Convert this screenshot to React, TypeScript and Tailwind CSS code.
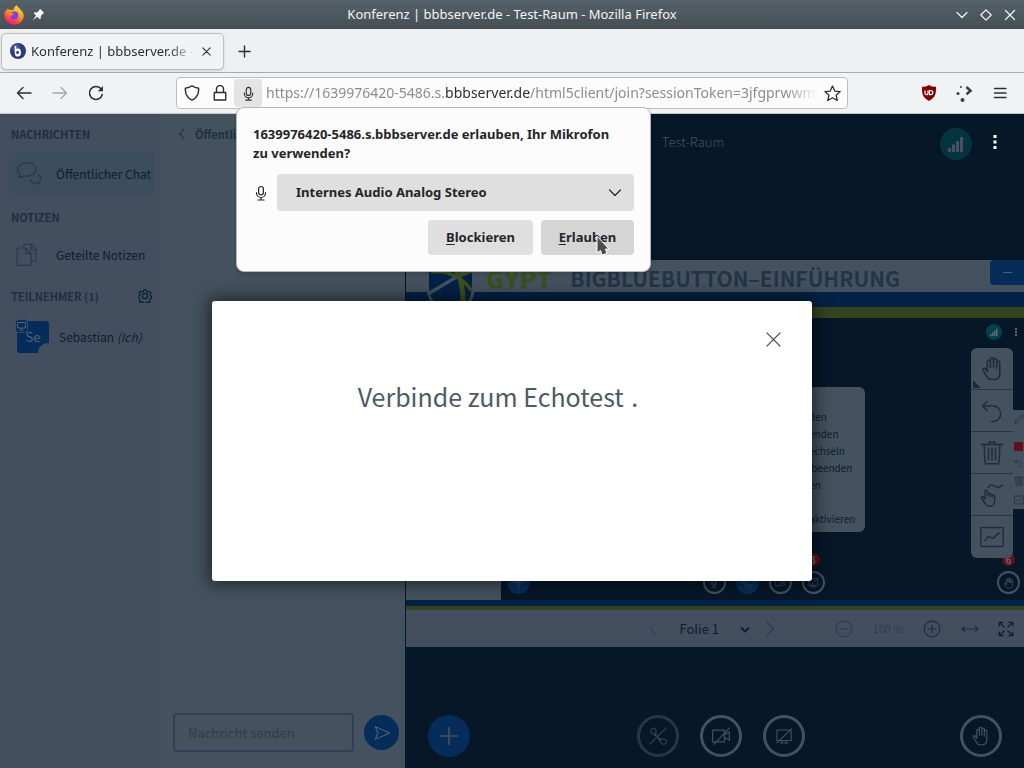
import { ReactNode, useState } from 'react'

type IconProps = {
  size?: number
  className?: string
  stroke?: number
  box?: number
  children: ReactNode
}

function Icon({ size = 16, className = '', stroke = 1, box = 24, children }: IconProps) {
  return (
    <svg
      width={size}
      height={size}
      viewBox={`0 0 ${box} ${box}`}
      className={`shrink-0 ${className}`}
      fill="none"
      stroke="currentColor"
      strokeWidth={stroke}
      strokeLinecap="round"
      strokeLinejoin="round"
      aria-hidden="true"
    >
      {children}
    </svg>
  )
}

const handPath =
  'M7 14V5.5a1.5 1.5 0 0 1 3 0V11V3.2a1.5 1.5 0 0 1 3 0V11V4a1.5 1.5 0 0 1 3 0V12V6.5a1.5 1.5 0 0 1 3 0V16c0 4-2 6.5-5 6.5h-3c-2.500 0-3.500-1-4.500-3L2.800 13.500c-.6-1.500 1-2.600 2.200-1.300L7 15'

const HandIcon = ({ size = 22, stroke = 1.4 }) => (
  <Icon size={size} stroke={stroke}>
    <path d={handPath} />
  </Icon>
)

const UndoIcon = ({ size = 24, stroke = 1.4 }) => (
  <Icon size={size} stroke={stroke}>
    <path d="M7 2.500 2.500 7 7 11.500M2.500 7H13a7.500 7.500 0 0 1 0 15.500h-1.500" />
  </Icon>
)

const TrashIcon = ({ size = 24, stroke = 1.4 }) => (
  <Icon size={size} stroke={stroke}>
    <path d="M1.500 3.500h21M4 3.500 5 21.500a1.500 1.500 0 0 0 1.500 1.300h11a1.500 1.500 0 0 0 1.500-1.300L20 3.500M8.500 3.500 9.500 1h5l1 2.500M8.500 7v12M12 7v12M15.500 7v12" />
  </Icon>
)

const ChartIcon = ({ size = 24, stroke = 1.4 }) => (
  <Icon size={size} stroke={stroke}>
    <rect x="0.8" y="2.500" width="22.400" height="19" rx="1.200" />
    <path d="M5 15.500c2-4 4-4.500 6-3s3 .5 4.500-1.500 2-2.500 4-3" />
  </Icon>
)

const MultiUserIcon = () => (
  <Icon size={24} stroke={1.4}>
    <path d="M8 4.500c2.500-3.500 4.500-3 6.500-1.500s5 2 8-1" />
    <path d="M5 16V8.500a1.300 1.300 0 0 1 2.600 0V13V11.500a1.200 1.200 0 0 1 2.400 0V13.500V12a1.200 1.200 0 0 1 2.300 0V14V13.200a1.200 1.200 0 0 1 2.300 0V18c0 3-1.500 5-4 5H8.500c-1.500 0-2.300-.8-3-2L1.500 15c-.5-1.200.7-2 1.700-1.200L5 16" />
  </Icon>
)

const PlusIcon = ({ size = 20, stroke = 2 }) => (
  <Icon size={size} stroke={stroke}>
    <path d="M12 2v20M2 12h20" />
  </Icon>
)

const MicIcon = ({ size = 16, className = '' }) => (
  <Icon size={size} box={16} stroke={1.2} className={className}>
    <rect x="5.600" y="1.500" width="4.800" height="8.500" rx="2.400" />
    <path d="M3.500 7.500v.5a4.500 4.500 0 0 0 9 0v-.5M8 12.500V15M5 15h6" />
  </Icon>
)

const CameraOffIcon = ({ size = 20 }) => (
  <Icon size={size} stroke={1.4}>
    <path d="M2 5h14v14H2zM16 10.500 22 7v10l-6-3.500M22 2.500 3.500 22" />
  </Icon>
)

const ScreenOffIcon = ({ size = 20 }) => (
  <Icon size={size} stroke={1.4}>
    <path d="M2.500 4h19v14h-19zM9 18v3M15 18v3M7 21.200h10M22 2.500 2.500 21" />
  </Icon>
)

// handset with a stroke through it
const PhoneOffIcon = () => (
  <Icon size={18} stroke={1.5}>
    <path d="M2.500 5c0-2.500 2.500-4 4.500-3s3 3.500 2 6c-.5 1.500 0 2.500 1 3.500l4 4c1 1 2.200 1.200 3.500.7 2.500-.8 5 .3 5.500 2.500s-1 4.300-3.500 4.300-4-1.500-4.500-3.500c-.3-1.500-1-2.500-2-3.500l-5-5c-1-1-2-1.500-3-2C3.300 8.200 2.500 6.700 2.500 5zM22.500 1.500l-21 21" />
  </Icon>
)

const SignalIcon = ({ size = 16 }) => (
  <Icon size={size} box={16} stroke={0}>
    <path fill="currentColor" d="M0 12h3v4H0zM4 8.500h3V16H4zM8 5h3v11H8zM12 1h3v15h-3z" />
  </Icon>
)

function TitleBar() {
  return (
    <div className="flex h-[29px] shrink-0 items-center bg-linear-to-b from-[#55626b] to-[#454e55] text-[#f4f5f5]">
      <div className="flex w-[100px] items-center gap-2 pl-1">
        <svg width="20" height="20" viewBox="0 0 20 20" aria-hidden="true">
          <defs>
            <linearGradient id="fox" x1="0.8" y1="0" x2="0.3" y2="1">
              <stop offset="0" stopColor="#ffe43c" />
              <stop offset="0.45" stopColor="#ff9a1f" />
              <stop offset="0.8" stopColor="#ff3750" />
              <stop offset="1" stopColor="#e31587" />
            </linearGradient>
          </defs>
          <path
            d="M12.500 0c.4 1.800 3 2.800 4.200 4.800C19 7 20 9.500 19.600 12c-.8 4.500-4.600 7.800-9.400 7.800C4.500 19.800.3 15.500.4 10c0-2.200.8-4 1.400-5.200L2.600 6.300 3.500 3.500 5.500 5c1.200-.6 2.700-.4 3.600.2C10 3 11 1 12.500 0z"
            fill="url(#fox)"
          />
          <circle cx="10.300" cy="10.600" r="4" fill="#7543e3" />
          <path d="M4.500 7.500c2 .8 4.500 0 5.500 1.700-1.700.3-2.700 1-2.800 2-1.500-.5-2.500-2-2.700-3.700z" fill="#ff8a16" />
        </svg>
        <svg width="13" height="13" viewBox="0 0 13 13" className="text-white" aria-hidden="true">
          <path d="M8 .8 12.200 5l-1.300.7-2.200 2.200.1 2.600-1 .7-2.500-2.500L.8 12.300 4 7.500 1.800 5.300l.7-1 2.600.1L7.300 2.200z" fill="currentColor" />
        </svg>
      </div>
      <h1 className="flex-1 truncate text-center text-[13px]">Konferenz | bbbserver.de - Test-Raum - Mozilla Firefox</h1>
      <div className="flex w-[100px] items-center justify-end gap-3 pr-2">
        <button type="button" aria-label="Minimieren">
          <Icon size={12} box={12} stroke={1.2}>
            <path d="m1 3.500 5 5 5-5" />
          </Icon>
        </button>
        <button type="button" aria-label="Maximieren">
          <Icon size={12} box={12} stroke={1.2}>
            <path d="m6 .8 5.200 5.200L6 11.200.8 6z" />
          </Icon>
        </button>
        <button type="button" aria-label="Fenster schließen">
          <Icon size={12} box={12} stroke={1.2}>
            <path d="m1.500 1.500 9 9M10.500 1.500l-9 9" />
          </Icon>
        </button>
      </div>
    </div>
  )
}

function TabBar() {
  return (
    <div className="flex h-11 shrink-0 items-center border-b border-[#a9abad] bg-[#eeeff1] pt-px pl-px text-[#2a2e32]">
      <div className="flex h-[37px] w-[223px] items-center gap-1 rounded-[5px] border border-[#bcbec1] bg-[#f1f2f4] px-2 shadow-sm">
        <svg width="16" height="16" viewBox="0 0 16 16" className="shrink-0" aria-hidden="true">
          <circle cx="8" cy="8" r="8" fill="#2b3a7e" />
          <circle cx="6" cy="5" r="4" fill="#6673a8" opacity="0.5" />
          <path d="M5.500 3v7.500M5.500 8.200a2.300 2.300 0 1 1 0 2.300a2.300 2.300 0 0 0 4.600 0V8.500a2.300 2.300 0 0 0-4.600 0" fill="none" stroke="#fff" strokeWidth="1.500" />
        </svg>
        <span className="flex-1 overflow-hidden pl-px text-[13px] leading-5 whitespace-nowrap [mask-image:linear-gradient(to_right,black_85%,transparent)]">
          Konferenz | bbbserver.de -
        </span>
        <button type="button" aria-label="Tab schließen" className="px-1">
          <Icon size={9} box={9} stroke={1.1}>
            <path d="m.8.8 7.400 7.400M8.200.8.8 8.200" />
          </Icon>
        </button>
      </div>
      <button type="button" aria-label="Neuer Tab" className="ml-3.5">
        <Icon size={13} box={13} stroke={1.4}>
          <path d="M6.500 1v11M1 6.500h11" />
        </Icon>
      </button>
    </div>
  )
}

function NavBar() {
  return (
    <div className="flex h-[41px] shrink-0 items-center border-b border-[#c3c5c7] bg-[#f1f2f4] text-[#2a2e32]">
      <div className="flex w-[176px] items-center gap-5 pl-4">
        <button type="button" aria-label="Zurück">
          <Icon size={16} box={16} stroke={1.4}>
            <path d="M15 8H1.500M7 2.500 1.500 8 7 13.500" />
          </Icon>
        </button>
        <button type="button" aria-label="Vor" className="text-[#a5a7a9]">
          <Icon size={16} box={16} stroke={1.4}>
            <path d="M1 8h13.500M9 2.500 14.500 8 9 13.500" />
          </Icon>
        </button>
        <button type="button" aria-label="Neu laden">
          <Icon size={16} box={16} stroke={1.5}>
            <path d="M14.300 9.500A6.500 6.500 0 1 1 12.800 3.500" />
            <path d="M15 1v5.200H9.800z" fill="currentColor" stroke="none" />
          </Icon>
        </button>
      </div>
      <div className="flex h-8 w-[672px] items-center rounded border border-[#b9bbbd] bg-[#fcfcfc]">
        <button type="button" aria-label="Schutz vor Aktivitätenverfolgung" className="pl-[7px]">
          <Icon size={16} box={16} stroke={1.4}>
            <path d="M8 .8c2 1.500 4 2.200 6.700 2.400.2 5.300-1.700 9.700-6.700 12-5-2.300-6.900-6.700-6.700-12C4 3 6 2.300 8 .8z" />
          </Icon>
        </button>
        <button type="button" aria-label="Verbindung sicher" className="ml-3">
          <Icon size={16} box={16} stroke={1.4}>
            <path d="M2.300 7.500h11.400v7.500H2.300zM4.500 7.500V4a3.500 3.500 0 0 1 7 0v3.500" />
          </Icon>
        </button>
        <button type="button" aria-label="Mikrofon-Berechtigung" className="ml-1.5 flex h-7 w-7 items-center justify-center rounded-sm bg-[#e4e4e4]">
          <MicIcon size={15} />
        </button>
        <div
          role="textbox"
          aria-label="Adresse"
          className="ml-1 flex-1 overflow-hidden text-[14px] leading-5 whitespace-nowrap text-[#8b8d8f] [mask-image:linear-gradient(to_right,black_94%,transparent)]"
        >
          https://1639976420-5486.s.<span className="text-[#2a2e32]">bbbserver.de</span>/html5client/join?sessionToken=3jfgprwwml
        </div>
        <button type="button" aria-label="Lesezeichen hinzufügen" className="mr-1.5 ml-1.5">
          <Icon size={17} box={16} stroke={1.2}>
            <path d="m8 1 2.100 4.700 5.100.5-3.900 3.400 1.200 5L8 12l-4.500 2.600 1.200-5L.8 6.200l5.100-.5z" />
          </Icon>
        </button>
      </div>
      <div className="flex flex-1 items-center justify-end gap-[19px] pr-4">
        <button type="button" aria-label="uBlock Origin">
          <svg width="16" height="16" viewBox="0 0 16 16" aria-hidden="true">
            <path d="M8 0c2 1.400 4 1.800 7 1.800 0 6.700 0 10.200-7 14.200C1 12 1 8.500 1 1.800 4 1.800 6 1.400 8 0z" fill="#800000" />
            <path d="M4 5.500v2.700a1.500 1.500 0 0 0 3 0V5.500M8.500 5.500v4.200h1.200a2.100 2.100 0 0 0 0-4.200z" fill="none" stroke="#fff" strokeWidth="1.200" />
          </svg>
        </button>
        <button type="button" aria-label="Erweiterung">
          <svg width="17" height="17" viewBox="0 0 17 17" fill="#3c4043" aria-hidden="true">
            <circle cx="5" cy="2" r="1" />
            <circle cx="2" cy="8.500" r="1.500" />
            <circle cx="6.500" cy="15" r="2" />
            <path d="m10.500 2 4 3.700-4 3.700" fill="none" stroke="#3c4043" strokeWidth="2.600" />
          </svg>
        </button>
        <button type="button" aria-label="Menü">
          <Icon size={16} box={16} stroke={1.4}>
            <path d="M2.500 3.500h11.500M2.500 8h11.500M2.500 12.500h11.500" />
          </Icon>
        </button>
      </div>
    </div>
  )
}

function PermissionPopup() {
  return (
    <div className="absolute top-[107px] left-[236px] w-[415px] rounded-lg border border-[#b4b6b8] bg-[#fcfcfc] px-4 pt-[17px] pb-4 text-[13px] font-bold text-[#232629] shadow-md">
      <p className="leading-[19px]">
        1639976420-5486.s.bbbserver.de erlauben, Ihr Mikrofon
        <br />
        zu verwenden?
      </p>
      <div className="mt-[11px] flex items-center gap-2">
        <MicIcon size={16} />
        <div className="relative flex-1">
          <select
            aria-label="Mikrofon"
            className="h-[37px] w-full appearance-none rounded bg-[#dfdfdf] pl-[19px] font-bold"
          >
            <option>Internes Audio Analog Stereo</option>
          </select>
          <Icon size={14} box={14} stroke={1.2} className="pointer-events-none absolute top-3 right-3">
            <path d="m1.500 4 5.500 5.500L12.500 4" />
          </Icon>
        </div>
      </div>
      <div className="mt-[9px] flex justify-end gap-2">
        <button type="button" className="h-[35px] w-[105px] rounded bg-[#dfdfdf]">
          <span className="underline underline-offset-2">B</span>lockieren
        </button>
        <button type="button" className="h-[35px] w-[93px] rounded bg-[#d5d5d5]">
          <span className="underline underline-offset-2">E</span>rlauben
        </button>
      </div>
      <svg width="14" height="22" viewBox="0 0 14 22" className="absolute top-[127px] left-[359px]" aria-hidden="true">
        <path d="M1 1v17l3.500-2.500 1.500 4.500 5-1.500-1.500-4.500H13z" fill="#4d4d4d" stroke="#fff" />
      </svg>
    </div>
  )
}

function Sidebar() {
  return (
    <aside className="w-40 shrink-0 bg-[#434f5f] pt-2.5 pl-2 text-[12px] text-[#0b1d2f]">
      <h2 className="pl-[3px] text-[11px] leading-5 font-bold text-[#1d2f41]">NACHRICHTEN</h2>
      <button type="button" className="mt-[9px] flex h-[41px] w-[147px] items-center rounded-l bg-[#3b4d5e] pl-2 whitespace-nowrap">
        <Icon size={26} className="mr-3.5 text-[#24384b]">
          <path d="M10 1.500c5 0 8.500 2.700 8.500 6.300S15 14 10 14c-1 0-2-.1-3-.4-1.200 1-2.600 1.700-4.500 1.900 1-.9 1.500-1.900 1.500-3C2.300 11.300 1.500 9.700 1.500 7.800c0-3.600 3.500-6.300 8.500-6.300zM20.500 12.500c1.500.8 2.500 2 2.500 3.500 0 1.300-.6 2.300-1.700 3 0 .8.400 1.700 1.200 2.500-1.500-.1-2.700-.6-3.500-1.400-3 .4-5.300-.8-5.800-3" />
        </Icon>
        Öffentlicher Chat
      </button>
      <h2 className="mt-[13px] pl-[3px] text-[11px] leading-5 font-bold text-[#1d2f41]">NOTIZEN</h2>
      <button type="button" className="mt-[7px] flex h-[41px] w-[147px] items-center pl-2 whitespace-nowrap">
        <Icon size={26} className="mr-3.5 text-[#24384b]">
          <path d="M7 4V3.500A1.500 1.500 0 0 1 8.500 2H14l4.500 4.500V16a1.500 1.500 0 0 1-1.500 1.500h-3M14 2v5h4.500M2.500 5.500H9l5 5V20a1.500 1.500 0 0 1-1.500 1.500h-9A1.500 1.500 0 0 1 1 20V7a1.500 1.500 0 0 1 1.500-1.500M9 5.500V10.500h5" />
        </Icon>
        Geteilte Notizen
      </button>
      <div className="mt-[11px] flex items-center justify-between pr-2 pl-[3px]">
        <h2 className="text-[11px] leading-5 font-bold text-[#1d2f41]">TEILNEHMER (1)</h2>
        <button type="button" aria-label="Teilnehmer verwalten">
          <Icon size={14} stroke={2}>
            <circle cx="12" cy="12" r="4.500" />
            <path d="M10 1.500h4l.7 3 2.400 1 2.700-1.600 2.400 2.900-1.600 2.600 1 2.300 1.900 1v2.800l-2.700.9-1 2.300 1.300 2.600-2.700 2.400-2.600-1.400-2.100.8-.8 2.400h-3l-.8-2.700-2.200-1-2.500 1.200-2.300-2.600 1.200-2.500-.8-2.200-2.500-.8v-3l2.700-.8.9-2.300-1.300-2.600 2.600-2.400 2.500 1.400 2.200-.9z" />
          </Icon>
        </button>
      </div>
      <div className="mt-[11px] flex h-10 items-center pl-[9px]">
        <div className="relative mr-2.5 flex h-8 w-8 items-center justify-center">
          <svg width="32" height="32" viewBox="0 0 32 32" className="absolute inset-0 overflow-visible" aria-hidden="true">
            <path d="M3 0h26a3 3 0 0 1 3 3v19a10 10 0 0 0-11 10H3a3 3 0 0 1-3-3V3a3 3 0 0 1 3-3z" fill="#062d5a" />
            <rect x="-1.500" y="-1.500" width="12" height="13" rx="3" fill="#062d5a" stroke="#36506c" />
            <path d="M.5 1.500h8v5.500h-8zM3 10l1.500-2.500L6 10" fill="none" stroke="#50657d" />
          </svg>
          <span className="relative text-[13px] text-[#50657d]">Se</span>
        </div>
        <span className="whitespace-nowrap">
          Sebastian <i>(Ich)</i>
        </span>
      </div>
    </aside>
  )
}

function ChatPanel() {
  return (
    <section className="flex w-[245px] shrink-0 flex-col justify-between bg-[#44525f] pl-[13px]">
      <button type="button" className="mt-2.5 flex h-5 items-center gap-1 text-[11px] font-bold text-[#1d2f41]">
        <Icon size={18} stroke={1.5}>
          <path d="m15 5-6 7 6 7" />
        </Icon>
        Öffentlicher Chat
      </button>
      <form className="flex items-center gap-2.5 pb-4" onSubmit={(e) => e.preventDefault()}>
        <input
          type="text"
          aria-label="Nachricht senden"
          placeholder="Nachricht senden"
          className="h-[39px] w-[181px] rounded border-2 border-[#2f4056] px-[13px] text-[13px] placeholder:text-[#2c3c4f]"
        />
        <button type="submit" aria-label="Senden" className="flex h-[35px] w-[35px] items-center justify-center rounded-full bg-[#062d5a] text-[#50657d]">
          <Icon size={18} stroke={1.4}>
            <path d="M3 3.500 22 12 3 20.500 6.500 12z" />
          </Icon>
        </button>
      </form>
    </section>
  )
}

const menuLines = ['den', 'enden', 'echseln', '\u00a0beenden', 'en', '\u00a0', 'aktivieren']

function Slide() {
  return (
    <div className="relative flex h-[350px] shrink-0 flex-col overflow-hidden bg-[#061728]">
      <div className="flex h-8 items-center bg-[#44525f] pt-1.5 pl-20">
        <span className="text-[25px] font-black text-[#3b5020]">GYPT</span>
        <span className="ml-[18px] text-[21px] font-bold whitespace-nowrap text-[#233447]">BIGBLUEBUTTON–EINFÜHRUNG</span>
      </div>
      <div className="h-[15px] bg-[#042247]" />
      <div className="h-[11px] bg-[#35441f]" />
      <div className="flex min-h-0 flex-1">
        <div className="w-[95px] shrink-0 bg-[#44525f]" />
        <div className="flex min-w-0 flex-1 flex-col">
          <div className="flex h-[69px] items-start justify-end gap-2.5 pt-1.5 pr-1 text-[#5b6c78]">
            <span className="flex h-4 w-4 items-center justify-center rounded-full bg-[#04404b]">
              <SignalIcon size={8} />
            </span>
            <Icon size={8} box={8} stroke={0} className="mt-1">
              <path d="M3 0h2v2H3zM3 3h2v2H3zM3 6h2v2H3z" fill="currentColor" />
            </Icon>
          </div>
          <ul className="mr-[159px] ml-auto h-[145px] w-[165px] rounded-md bg-[#44525f] pt-[21px] pl-[109px] text-[10px] leading-[17px] text-[#0b1d2f]">
            {menuLines.map((line, i) => (
              <li key={i}>{line}</li>
            ))}
          </ul>
          <div className="mt-auto flex justify-between pr-1 pb-1.5 pl-1.5 text-[#44525f]">
            <span className="flex h-[23px] w-[23px] items-center justify-center rounded-full bg-[#062d5a]">
              <PlusIcon size={11} />
            </span>
            <div className="flex gap-2.5">
              <span className="flex h-[23px] w-[23px] items-center justify-center rounded-full border-2 border-[#44525f]">
                <MicIcon size={10} />
              </span>
              <span className="flex h-[23px] w-[23px] items-center justify-center rounded-full bg-[#062d5a]">
                <Icon size={12} stroke={1.6}>
                  <path d="M4 3c2-2 4.500-.5 5 2 .4 2-1.500 3-.5 4.500l6 6c1.500 1 2.500-1 4.500-.5 2.500.5 4 3 2 5s-5.500 2.200-9-.5-7-6.500-9-10S2.300 4.700 4 3z" />
                </Icon>
              </span>
              <span className="flex h-[23px] w-[23px] items-center justify-center rounded-full border-2 border-[#44525f]">
                <CameraOffIcon size={11} />
              </span>
              <span className="relative flex h-[23px] w-[23px] items-center justify-center rounded-full border-2 border-[#44525f]">
                <ScreenOffIcon size={11} />
                <Badge>3</Badge>
              </span>
            </div>
            <span className="relative flex h-[23px] w-[23px] items-center justify-center rounded-full border-2 border-[#44525f]">
              <HandIcon size={12} />
              <Badge>6</Badge>
            </span>
          </div>
        </div>
      </div>
      <div className="h-1.5 bg-[#042247]" />
      <div className="h-1 bg-[#35441f]" />

      <svg width="52" height="60" viewBox="0 0 52 60" className="absolute top-0 left-5" aria-hidden="true">
        <path d="M1 0h48v26c0 15-8 25-24 32C9 51 1 41 1 30z" fill="#44525f" />
        <path d="M3 4h43v22c0 13-7 22-21 29C11 48 3 38 3 28z" fill="#042247" />
        <path d="M2 34 42 10" stroke="#44525f" strokeWidth="3.500" fill="none" />
        <path d="M26 5c8 8 12 22 11 44" stroke="#3b5020" strokeWidth="5" fill="none" />
        <path d="M5 12c16-3 32 6 41 19M28 17c6-1 12-3 18-6" stroke="#3b5020" strokeWidth="3.500" fill="none" />
      </svg>

      {/* small toolbar, part of the slide */}
      <div className="absolute top-[150px] right-0 flex h-[99px] w-[11px] flex-col items-center justify-around overflow-hidden bg-[#44525f] text-[#1f3043]">
        <Icon size={10} stroke={2}>
          <path d="m2 22 2-6L18 2l4 4L8 20z" />
        </Icon>
        <span className="h-px w-px bg-current" />
        <span className="h-[9px] w-[9px] bg-[#640f1c]" />
        <UndoIcon size={9} stroke={1.8} />
        <TrashIcon size={10} stroke={1.8} />
        <ChartIcon size={10} stroke={1.8} />
      </div>

      <button
        type="button"
        aria-label="Präsentation minimieren"
        className="absolute top-0 right-0 flex h-[25px] w-[34px] items-center justify-center rounded-l-sm bg-[#062d5a] text-[#44627f]"
      >
        <span className="h-px w-[9px] bg-current" />
      </button>

      {/* whiteboard tools */}
      <div className="absolute top-[88px] right-[11px] flex w-[42px] flex-col divide-y divide-[#25364a] overflow-hidden rounded-md bg-[#44525f] text-[#1b2c40]">
        <button type="button" aria-label="Verschieben" className="relative flex h-[42px] items-center justify-center">
          <HandIcon size={25} stroke={1.5} />
          <svg width="8" height="8" viewBox="0 0 8 8" className="absolute bottom-px left-0.5" aria-hidden="true">
            <path d="M0 0v8h8z" fill="currentColor" />
          </svg>
        </button>
        <button type="button" aria-label="Rückgängig" className="flex h-[42px] items-center justify-center">
          <UndoIcon />
        </button>
        <button type="button" aria-label="Löschen" className="flex h-[42px] items-center justify-center">
          <TrashIcon />
        </button>
        <button type="button" aria-label="Mehrbenutzermodus" className="flex h-[42px] items-center justify-center">
          <MultiUserIcon />
        </button>
        <button type="button" aria-label="Umfrage" className="flex h-[42px] items-center justify-center">
          <ChartIcon />
        </button>
      </div>
    </div>
  )
}

function Badge({ children }: { children: ReactNode }) {
  return (
    <span className="absolute -top-5 left-[3px] h-[13px] w-[13px] rounded-full bg-[#640f1c] text-center text-[10px] leading-[13px] font-bold text-[#5d6672]">
      {children}
    </span>
  )
}

function SlideControls() {
  return (
    <div className="grid h-[37px] shrink-0 grid-cols-[1fr_auto_1fr] items-center bg-[#434f5f] text-[#1b2c40]">
      <div />
      <div className="flex items-center pr-[7px]">
        <button type="button" aria-label="Vorherige Folie" className="text-[#2c3d50]">
          <Icon size={16} stroke={1.5}>
            <path d="M16 2 7 12l9 10" />
          </Icon>
        </button>
        <div className="relative ml-[18px]">
          <select aria-label="Folie auswählen" className="h-8 w-[70px] appearance-none text-[13px] text-[#0b1d2f]">
            <option>Folie 1</option>
          </select>
          <Icon size={10} box={10} stroke={1.8} className="pointer-events-none absolute top-3 right-0 text-[#0b1d2f]">
            <path d="m1.500 3 3.500 3.500L8.500 3" />
          </Icon>
        </div>
        <button type="button" aria-label="Nächste Folie" className="ml-3">
          <Icon size={16} stroke={1.5}>
            <path d="m8 2 9 10-9 10" />
          </Icon>
        </button>
      </div>
      <div className="flex items-center justify-end pr-2.5">
        <button type="button" aria-label="Verkleinern" className="text-[#2c3d50]">
          <Icon size={18} stroke={1.5}>
            <circle cx="12" cy="12" r="10.500" />
            <path d="M7 12h10" />
          </Icon>
        </button>
        <span className="w-[70px] text-center text-[11px] text-[#2c3d50]">100 %</span>
        <button type="button" aria-label="Vergrößern">
          <Icon size={18} stroke={1.5}>
            <circle cx="12" cy="12" r="10.500" />
            <path d="M7 12h10M12 7v10" />
          </Icon>
        </button>
        <button type="button" aria-label="An Breite anpassen" className="ml-5">
          <Icon size={18} stroke={1.5}>
            <path d="M1.500 12h21M5 8.500 1.500 12 5 15.500M19 8.500l3.500 3.500-3.500 3.500" />
          </Icon>
        </button>
        <button type="button" aria-label="Vollbild" className="ml-[19px] text-[#0b1d2f]">
          <Icon size={16} stroke={1.8}>
            <path d="M2 7.500V2h5.500M2 2l7 7M16.500 2H22v5.500M22 2l-7 7M2 16.500V22h5.500M2 22l7-7M16.500 22H22v-5.500M22 22l-7-7" />
          </Icon>
        </button>
      </div>
    </div>
  )
}

function ActionBar() {
  return (
    <div className="mt-auto flex justify-between px-[22px] pb-[11px] text-[#44525f]">
      <button type="button" aria-label="Aktionen" className="flex h-[42px] w-[42px] items-center justify-center rounded-full bg-[#062d5a]">
        <PlusIcon />
      </button>
      <div className="flex gap-[21px] pl-[11px]">
        <button type="button" aria-label="Audio beitreten" className="flex h-[42px] w-[42px] items-center justify-center rounded-full border-[3px] border-[#263747] text-[#344452]">
          <PhoneOffIcon />
        </button>
        <button type="button" aria-label="Webcam freigeben" className="flex h-[42px] w-[42px] items-center justify-center rounded-full border-[3px] border-[#44525f]">
          <CameraOffIcon />
        </button>
        <button type="button" aria-label="Bildschirm freigeben" className="flex h-[42px] w-[42px] items-center justify-center rounded-full border-[3px] border-[#44525f]">
          <ScreenOffIcon size={18} />
        </button>
      </div>
      <button type="button" aria-label="Hand heben" className="flex h-[42px] w-[42px] items-center justify-center rounded-full border-[3px] border-[#44525f]">
        <HandIcon size={20} />
      </button>
    </div>
  )
}

function EchoTestModal({ onClose }: { onClose: () => void }) {
  return (
    <div className="absolute inset-0 flex items-center justify-center">
      <div role="dialog" aria-label="Echotest" className="relative h-[280px] w-[600px] rounded-[3px] bg-white pt-[79px] text-[#4e5a66] shadow-[0_0_16px_4px_rgba(0,0,0,0.5)]">
        <button type="button" aria-label="Schließen" onClick={onClose} className="absolute top-[31px] right-[31px]">
          <Icon size={15} box={15} stroke={1.2}>
            <path d="m1 1 13 13M14 1 1 14" />
          </Icon>
        </button>
        <p className="pr-7 text-center text-[25px] leading-8">
          Verbinde zum Echotest <span className="ml-0.5">.</span>
        </p>
      </div>
    </div>
  )
}

export default function App() {
  const [showModal, setShowModal] = useState(true)

  return (
    <div className="relative flex h-screen flex-col overflow-hidden font-['Noto_Sans',sans-serif]">
      <TitleBar />
      <TabBar />
      <NavBar />
      <div className="relative flex min-h-0 flex-1 bg-[#061728] font-['Noto_Sans_CJK_SC',sans-serif]">
        <Sidebar />
        <ChatPanel />
        <main className="flex min-w-0 flex-1 flex-col pl-px">
          <header className="flex h-[146px] shrink-0 items-start pt-3.5">
            <h2 className="flex-1 pt-1 pl-10 text-center text-[13px] leading-5 font-light text-[#44525f]">Test-Raum</h2>
            <span className="flex h-8 w-8 items-center justify-center rounded-full bg-[#053440] text-[#44525f]">
              <SignalIcon size={16} />
            </span>
            <button type="button" aria-label="Optionen" className="mt-1.5 mr-[21px] ml-[15px] text-white">
              <Icon size={16} box={16} stroke={0}>
                <path d="M6.500 1h3v3h-3zM6.500 6.500h3v3h-3zM6.500 12h3v3h-3z" fill="currentColor" />
              </Icon>
            </button>
          </header>
          <Slide />
          <SlideControls />
          <ActionBar />
        </main>
        {showModal && <EchoTestModal onClose={() => setShowModal(false)} />}
      </div>
      <PermissionPopup />
    </div>
  )
}
